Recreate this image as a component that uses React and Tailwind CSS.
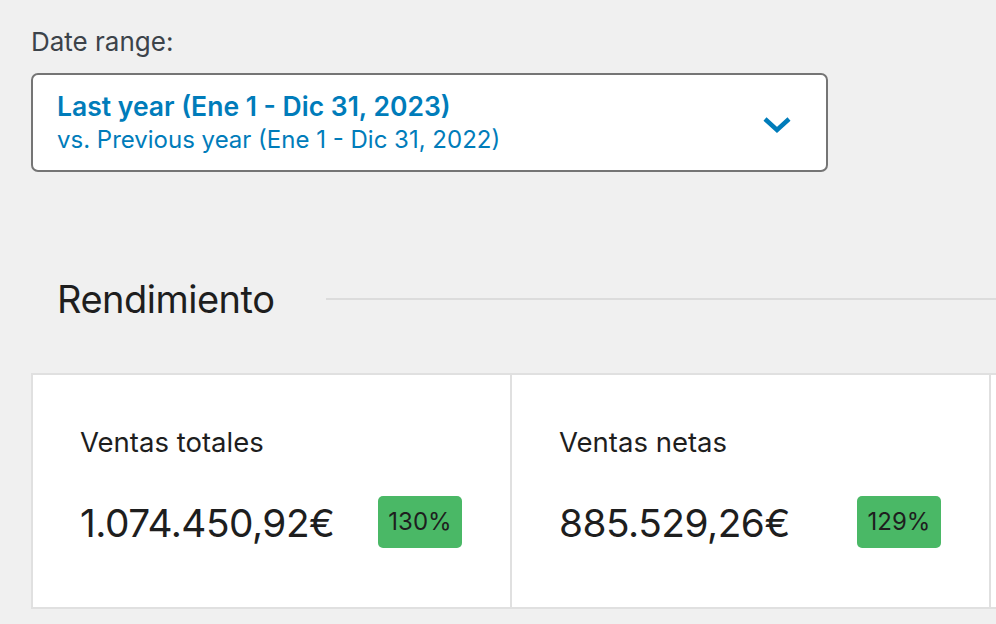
import React from "react";

const font = { fontFamily: "Inter, 'Noto Sans', sans-serif" };

function Metric({ label, value, delta }) {
  return (
    <div className="h-full w-[479px] shrink-0 border-r-2 border-[#e0e0e0] bg-white pl-[47px] pr-[48px] pt-[51px]">
      <div className="text-[27.5px] leading-[32px] text-[#1e1e1e]">{label}</div>
      <div className="mt-[37px] flex items-center justify-between">
        <div className="pt-[2px] text-[38.8px] leading-[52px] tracking-[-0.5px] text-[#1e1e1e]">{value}</div>
        <div className="flex h-[52px] w-[84px] items-center justify-center rounded-[5px] bg-[#4ab866] text-[24px] text-[#1e1e1e]">
          {delta}
        </div>
      </div>
    </div>
  );
}

export default function App() {
  return (
    <div className="h-[624px] w-[996px] overflow-hidden bg-[#f0f0f0]" style={font}>
      <div className="pl-[31px] pt-[24px]">
        <div className="text-[26px] leading-[36px] text-[#3c434a]">Date range:</div>
        <div className="mt-[13px] flex h-[99px] w-[797px] items-center justify-between rounded-[7px] border-2 border-[#757575] bg-white pl-[24px] pr-[34px]">
          <div className="text-[#007cba]">
            <div className="text-[26.5px] font-semibold leading-[33px]">Last year (Ene 1 - Dic 31, 2023)</div>
            <div className="text-[24px] leading-[33px]">vs. Previous year (Ene 1 - Dic 31, 2022)</div>
          </div>
          <svg width="30" height="18" viewBox="0 0 30 18" className="mt-[4px]">
            <path d="M3 3 L15 14 L27 3" fill="none" stroke="#007cba" strokeWidth="4.5" />
          </svg>
        </div>
      </div>
      <div className="mt-[101px] flex items-center pl-[57px]">
        <div className="text-[38px] leading-[52px] tracking-[-0.5px] text-[#1e1e1e]">Rendimiento</div>
        <div className="ml-[52px] h-[2px] flex-1 bg-[#dcdcdc]" />
      </div>
      <div className="ml-[31px] mt-[48px] flex h-[236px] border-2 border-r-0 border-[#e0e0e0] bg-white">
        <Metric label="Ventas totales" value="1.074.450,92€" delta="130%" />
        <Metric label="Ventas netas" value="885.529,26€" delta="129%" />
        <div className="flex-1 bg-white" />
      </div>
    </div>
  );
}
